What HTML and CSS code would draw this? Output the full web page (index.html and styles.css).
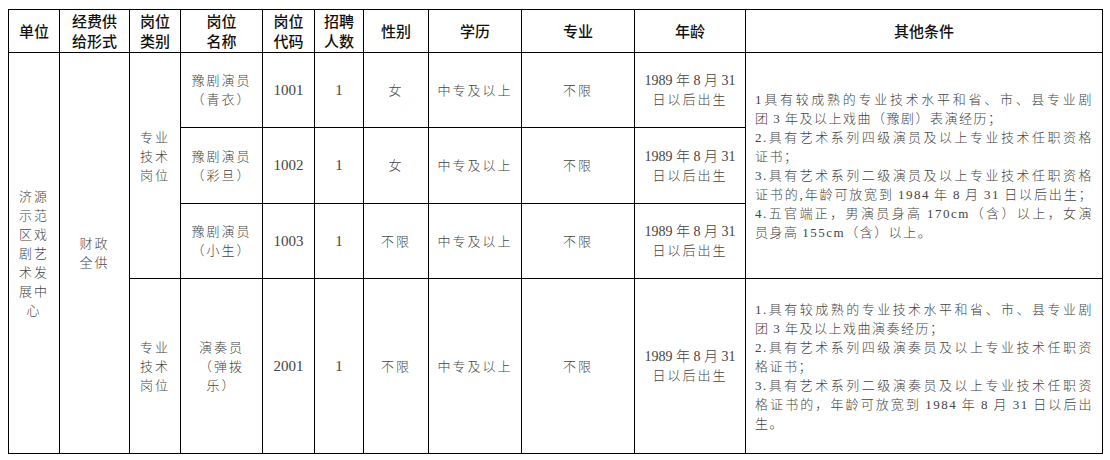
FILE: index.html
```html
<!DOCTYPE html>
<html lang="zh-CN">
<head>
<meta charset="utf-8">
<title>招聘岗位表</title>
<link rel="stylesheet" href="styles.css">
</head>
<body>
<table class="grid">
  <colgroup>
    <col class="c-unit"><col class="c-fund"><col class="c-type"><col class="c-name"><col class="c-code"><col class="c-count"><col class="c-sex"><col class="c-edu"><col class="c-major"><col class="c-age"><col class="c-cond">
  </colgroup>
  <thead>
    <tr class="head">
      <th>单位</th>
      <th>经费供<br>给形式</th>
      <th>岗位<br>类别</th>
      <th>岗位<br>名称</th>
      <th>岗位<br>代码</th>
      <th>招聘<br>人数</th>
      <th>性别</th>
      <th>学历</th>
      <th>专业</th>
      <th>年龄</th>
      <th>其他条件</th>
    </tr>
  </thead>
  <tbody>
    <tr class="r1">
      <td rowspan="4">济源<br>示范<br>区戏<br>剧艺<br>术发<br>展中<br>心</td>
      <td rowspan="4">财政<br>全供</td>
      <td rowspan="3" class="shift">专业<br>技术<br>岗位</td>
      <td>豫剧演员<br>（青衣）</td>
      <td class="num">1001</td>
      <td class="num">1</td>
      <td>女</td>
      <td>中专及以上</td>
      <td>不限</td>
      <td><span class="date">1989 年 8 月 31</span><br>日以后出生</td>
      <td rowspan="3" class="cond">
        <div class="j">1具有较成熟的专业技术水平和省、市、县专业剧</div>
        <div>团 3 年及以上戏曲（豫剧）表演经历；</div>
        <div class="j">2.具有艺术系列四级演员及以上专业技术任职资格</div>
        <div>证书；</div>
        <div class="j">3.具有艺术系列二级演员及以上专业技术任职资格</div>
        <div class="j">证书的,年龄可放宽到 1984 年 8 月 31 日以后出生；</div>
        <div class="j">4.五官端正，男演员身高 170cm（含）以上，女演</div>
        <div>员身高 155cm（含）以上。</div>
      </td>
    </tr>
    <tr class="r2">
      <td>豫剧演员<br>（彩旦）</td>
      <td class="num">1002</td>
      <td class="num">1</td>
      <td>女</td>
      <td>中专及以上</td>
      <td>不限</td>
      <td><span class="date">1989 年 8 月 31</span><br>日以后出生</td>
    </tr>
    <tr class="r3">
      <td>豫剧演员<br>（小生）</td>
      <td class="num">1003</td>
      <td class="num">1</td>
      <td>不限</td>
      <td>中专及以上</td>
      <td>不限</td>
      <td><span class="date">1989 年 8 月 31</span><br>日以后出生</td>
    </tr>
    <tr class="r4">
      <td>专业<br>技术<br>岗位</td>
      <td>演奏员<br>（弹拨<br>乐）</td>
      <td class="num">2001</td>
      <td class="num">1</td>
      <td>不限</td>
      <td>中专及以上</td>
      <td>不限</td>
      <td><span class="date">1989 年 8 月 31</span><br>日以后出生</td>
      <td class="cond">
        <div class="j">1.具有较成熟的专业技术水平和省、市、县专业剧</div>
        <div>团 3 年及以上戏曲演奏经历；</div>
        <div class="j">2.具有艺术系列四级演奏员及以上专业技术任职资</div>
        <div>格证书；</div>
        <div class="j">3.具有艺术系列二级演奏员及以上专业技术任职资</div>
        <div class="j">格证书的，年龄可放宽到 1984 年 8 月 31 日以后出</div>
        <div>生。</div>
      </td>
    </tr>
  </tbody>
</table>
</body>
</html>
```
FILE: styles.css
```css
html, body {
  margin: 0;
  background: #ffffff;
}

.grid {
  border-collapse: collapse;
  table-layout: fixed;
  width: 1094px;
  margin: 9px 0 0 8px;
}

.c-unit { width: 51px; }
.c-fund { width: 70px; }
.c-type { width: 51px; }
.c-name { width: 82px; }
.c-code { width: 52px; }
.c-count { width: 49px; }
.c-sex { width: 65px; }
.c-edu { width: 93px; }
.c-major { width: 113px; }
.c-age { width: 111px; }
.c-cond { width: 357px; }

.grid th,
.grid td {
  border: 1px solid #000;
  padding: 0 4px;
  text-align: center;
  vertical-align: middle;
}

.grid th {
  font-family: "Noto Sans CJK SC", sans-serif;
  font-weight: 500;
  font-size: 15px;
  line-height: 20px;
  color: #111;
}

.grid td {
  font-family: "Liberation Serif", "Noto Sans CJK SC", serif;
  font-weight: 300;
  font-size: 13px;
  line-height: 19px;
  letter-spacing: 2px;
  color: #444;
}

.head { height: 43px; }
.r1 { height: 75px; }
.r2 { height: 76px; }
.r3 { height: 75px; }
.r4 { height: 175px; }

.grid td.shift {
  padding-bottom: 18px;
}

.grid td.num {
  font-size: 15px;
  letter-spacing: 0;
}

.date {
  font-size: 14px;
  letter-spacing: 0;
}

.grid td.cond {
  text-align: left;
  padding: 0 9px;
  letter-spacing: 1.5px;
  word-spacing: -1px;
}

.cond .j {
  text-align: justify;
  text-align-last: justify;
}
```
